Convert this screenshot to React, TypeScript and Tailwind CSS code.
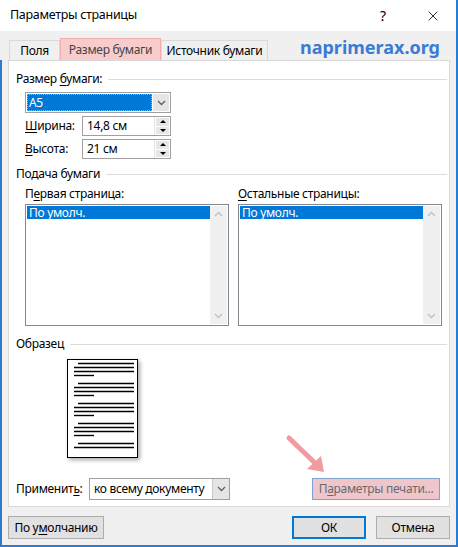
import { X } from "lucide-react";

const font = { fontFamily: '"Noto Sans", "Open Sans", sans-serif' };

function U({ children }: { children: string }) {
  return <span className="underline underline-offset-2">{children}</span>;
}

function GroupTitle({ children }: { children: React.ReactNode }) {
  return (
    <div className="flex items-center gap-[6px] h-[16px]">
      <span className="whitespace-nowrap">{children}</span>
      <div className="flex-1 h-px bg-[#dcdcdc]" />
    </div>
  );
}

function Spinner({ value }: { value: string }) {
  return (
    <div className="flex h-[20px] w-[89px] border border-[#a0a0a0] bg-white">
      <div className="flex-1 pl-[4px] leading-[18px]">{value}</div>
      <div className="flex flex-col w-[16px] border-l border-[#e5e5e5] p-px gap-px">
        <div className="flex-1 bg-[#e6e6e6] flex items-center justify-center">
          <div className="w-0 h-0 border-l-[3px] border-r-[3px] border-b-[3px] border-l-transparent border-r-transparent border-b-black" />
        </div>
        <div className="flex-1 bg-[#e6e6e6] flex items-center justify-center">
          <div className="w-0 h-0 border-l-[3px] border-r-[3px] border-t-[3px] border-l-transparent border-r-transparent border-t-black" />
        </div>
      </div>
    </div>
  );
}

function Chevron({ up, color = "#606060" }: { up?: boolean; color?: string }) {
  return (
    <svg width="9" height="6" viewBox="0 0 9 6">
      <path d={up ? "M1 5 L4.5 1.5 L8 5" : "M1 1 L4.5 4.5 L8 1"} fill="none" stroke={color} strokeWidth="1.3" />
    </svg>
  );
}

function ListBox({ label, under, rest }: { label: string; under: string; rest: string }) {
  return (
    <div className="flex flex-col w-[204px]">
      <div className="h-[16px] leading-[16px]">
        {label}
        <U>{under}</U>
        {rest}
      </div>
      <div className="mt-[2px] h-[122px] border border-[#828790] bg-white flex p-px">
        <div className="flex-1">
          <div className="h-[13px] bg-[#0078d7] text-white leading-[13px] pl-[2px]">По умолч.</div>
        </div>
        <div className="w-[17px] bg-[#f0f0f0] flex flex-col justify-between items-center py-[5px]">
          <Chevron up color="#c0c0c0" />
          <Chevron color="#c0c0c0" />
        </div>
      </div>
    </div>
  );
}

// miniature page in the preview area
function PagePreview() {
  const groups = [0, 20, 40, 60];
  return (
    <svg width="74" height="102" viewBox="0 0 74 102" className="drop-shadow-[2px_2px_2px_rgba(0,0,0,0.35)]">
      <rect x="0.5" y="0.5" width="70" height="98" fill="#fff" stroke="#000" />
      {groups.map((g) => (
        <g key={g} stroke="#000" strokeWidth="1.4">
          <line x1="11" x2="67" y1={4.5 + g} y2={4.5 + g} />
          <line x1="7" x2="67" y1={8.5 + g} y2={8.5 + g} />
          <line x1="7" x2="67" y1={12.5 + g} y2={12.5 + g} />
          <line x1="7" x2="27" y1={16.5 + g} y2={16.5 + g} />
        </g>
      ))}
      <g stroke="#000" strokeWidth="1.4">
        <line x1="11" x2="67" y1="84.5" y2="84.5" />
        <line x1="7" x2="67" y1="88.5" y2="88.5" />
      </g>
    </svg>
  );
}

export default function App() {
  return (
    <div style={font} className="relative w-[458px] h-[547px] bg-[#f0f0f0] text-[12px] tracking-[-0.3px] text-black border-r-2 border-b-2 border-[#2b7bd0] overflow-hidden">
      {/* title bar */}
      <div className="h-[31px] bg-white flex items-center pl-[10px]">
        <span className="text-[12.5px]">Параметры страницы</span>
        <div className="ml-auto flex items-center">
          <span className="w-[46px] text-center text-[14px] mr-[4px]">?</span>
          <span className="w-[46px] flex justify-center"><X size={16} strokeWidth={1.2} /></span>
        </div>
      </div>

      <div className="border-l-2 border-[#f0f0f0] h-[514px] flex flex-col">
        {/* tabs */}
        <div className="h-[29px] flex items-end pl-[7px] pr-[16px]">
          <div className="h-[20px] w-[51px] border border-b-0 border-[#d9d9d9] bg-[#f0f0f0] flex items-center justify-center">Поля</div>
          <div className="h-[22px] w-[101px] border border-b-0 border-[#f0b0b0] bg-[#f9cccc] flex items-center justify-center text-[#444]">Размер бумаги</div>
          <div className="h-[20px] w-[107px] border border-b-0 border-[#d9d9d9] bg-[#f0f0f0] flex items-center justify-center whitespace-nowrap">Источник бумаги</div>
          <div className="ml-auto self-center mt-[2px] text-[18px] tracking-[0px] font-bold text-[#3a7bd5] leading-none">naprimerax.org</div>
        </div>

        <div className="flex-1 flex flex-col border-l-2 border-[#2b7bd0] -ml-[2px]">
          {/* tab panel */}
          <div className="mx-[6px] h-[447px] bg-white border border-[#d9d9d9] pl-[7px] pr-[2px] pt-[10px] flex flex-col">
            <GroupTitle>
              Размер <U>б</U>умаги:
            </GroupTitle>
            <div className="ml-[9px] mt-[5px] w-[146px] h-[21px] border border-[#a0a0a0] flex p-px">
              <div className="flex-1 bg-[#0078d7] text-white leading-[17px] pl-[2px] outline outline-1 outline-dotted outline-[#f0a040] -outline-offset-1">A5</div>
              <div className="w-[16px] bg-[#e5e5e5] flex items-center justify-center ml-px">
                <Chevron />
              </div>
            </div>
            <div className="ml-[9px] mt-[3px] flex items-center">
              <span className="w-[57px]"><U>Ш</U>ирина:</span>
              <Spinner value="14,8 см" />
            </div>
            <div className="ml-[9px] mt-[3px] flex items-center">
              <span className="w-[57px]"><U>В</U>ысота:</span>
              <Spinner value="21 см" />
            </div>

            <div className="mt-[7px]">
              <GroupTitle>Подача бумаги</GroupTitle>
            </div>
            <div className="ml-[9px] mt-[4px] flex gap-[9px]">
              <ListBox label="П" under="е" rest="рвая страница:" />
              <ListBox label="" under="О" rest="стальные страницы:" />
            </div>

            <div className="mt-[10px]">
              <GroupTitle>Образец</GroupTitle>
            </div>
            <div className="ml-[51px] mt-[7px]">
              <PagePreview />
            </div>

            <div className="mt-[17px] flex items-center">
              <span className="w-[73px]">Применит<U>ь</U>:</span>
              <div className="w-[141px] h-[22px] border border-[#a0a0a0] flex bg-white">
                <div className="flex-1 pl-[4px] leading-[20px]">ко всему документу</div>
                <div className="w-[17px] bg-[#e5e5e5] border-l border-[#c8c8c8] flex items-center justify-center">
                  <Chevron />
                </div>
              </div>
              <div className="ml-auto mr-[7px] w-[128px] h-[22px] border border-[#7da2ce] bg-[#f0c6cd] flex items-center justify-center text-[#6a6a6a]">
                П<U>а</U>раметры печати...
              </div>
            </div>
          </div>

          {/* dialog buttons */}
          <div className="mt-[9px] mx-[6px] flex">
            <div className="w-[96px] h-[23px] border border-[#adadad] bg-[#e1e1e1] flex items-center justify-center">
              По у<U>м</U>олчанию
            </div>
            <div className="ml-auto w-[74px] h-[23px] border-2 border-[#0078d7] bg-[#e1e1e1] flex items-center justify-center">ОК</div>
            <div className="ml-[10px] w-[74px] h-[23px] border border-[#adadad] bg-[#e1e1e1] flex items-center justify-center">Отмена</div>
          </div>
        </div>
      </div>

      {/* pointer arrow over the print options button */}
      <svg className="absolute left-[284px] top-[433px]" width="44" height="42" viewBox="0 0 44 42">
        <line x1="5" y1="5" x2="32" y2="31" stroke="#f09b9f" strokeWidth="5" strokeLinecap="round" />
        <polygon points="40,39 23,36 37,23" fill="#f09b9f" />
      </svg>
    </div>
  );
}
